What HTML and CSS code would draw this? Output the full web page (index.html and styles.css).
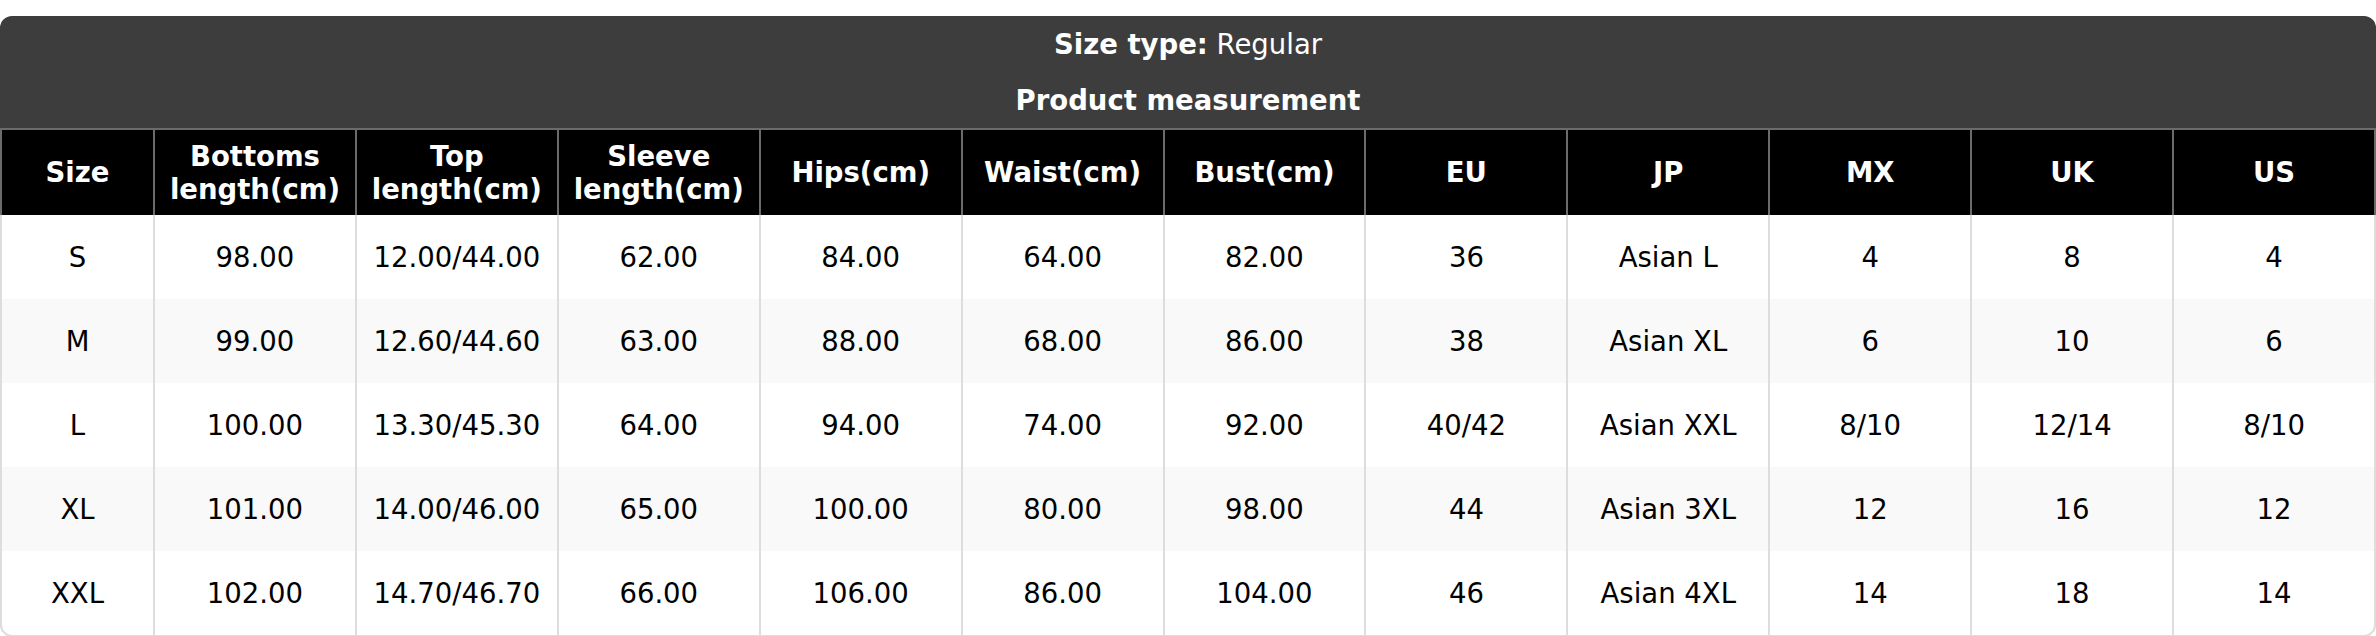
FILE: index.html
```html
<!DOCTYPE html>
<html lang="en">
<head>
<meta charset="utf-8">
<title>Size chart</title>
<link rel="stylesheet" href="styles.css">
</head>
<body>
<div class="page">
  <div class="card">
    <div class="title">
      <div class="title-line"><b>Size type:</b> Regular</div>
      <div class="title-line strong">Product measurement</div>
    </div>
    <table class="chart">
      <colgroup>
        <col class="col-size">
        <col><col><col><col><col><col><col><col><col><col><col>
      </colgroup>
      <thead>
        <tr>
          <th>Size</th>
          <th>Bottoms length(cm)</th>
          <th>Top length(cm)</th>
          <th>Sleeve length(cm)</th>
          <th>Hips(cm)</th>
          <th>Waist(cm)</th>
          <th>Bust(cm)</th>
          <th>EU</th>
          <th>JP</th>
          <th>MX</th>
          <th>UK</th>
          <th>US</th>
        </tr>
      </thead>
      <tbody>
        <tr>
          <td>S</td><td>98.00</td><td>12.00/44.00</td><td>62.00</td><td>84.00</td><td>64.00</td><td>82.00</td><td>36</td><td>Asian L</td><td>4</td><td>8</td><td>4</td>
        </tr>
        <tr>
          <td>M</td><td>99.00</td><td>12.60/44.60</td><td>63.00</td><td>88.00</td><td>68.00</td><td>86.00</td><td>38</td><td>Asian XL</td><td>6</td><td>10</td><td>6</td>
        </tr>
        <tr>
          <td>L</td><td>100.00</td><td>13.30/45.30</td><td>64.00</td><td>94.00</td><td>74.00</td><td>92.00</td><td>40/42</td><td>Asian XXL</td><td>8/10</td><td>12/14</td><td>8/10</td>
        </tr>
        <tr>
          <td>XL</td><td>101.00</td><td>14.00/46.00</td><td>65.00</td><td>100.00</td><td>80.00</td><td>98.00</td><td>44</td><td>Asian 3XL</td><td>12</td><td>16</td><td>12</td>
        </tr>
        <tr>
          <td>XXL</td><td>102.00</td><td>14.70/46.70</td><td>66.00</td><td>106.00</td><td>86.00</td><td>104.00</td><td>46</td><td>Asian 4XL</td><td>14</td><td>18</td><td>14</td>
        </tr>
      </tbody>
    </table>
  </div>
</div>
</body>
</html>
```
FILE: styles.css
```css
html, body {
  margin: 0;
  padding: 0;
  background: #ffffff;
}

body {
  font-family: "DejaVu Sans", Verdana, sans-serif;
  font-size: 27.5px;
  color: #000000;
}

.page {
  padding-top: 16px;
}

.card {
  position: relative;
  border-radius: 12px;
  overflow: hidden;
  background: #ffffff;
}

.card::after {
  content: "";
  position: absolute;
  left: 0;
  right: 0;
  bottom: 0;
  height: 40px;
  border: 2px solid #dddddd;
  border-top: none;
  border-radius: 0 0 12px 12px;
  pointer-events: none;
}

.title {
  background: #3d3d3d;
  color: #ffffff;
  text-align: center;
}

.title-line {
  height: 56px;
  line-height: 56px;
}

.title-line b,
.title-line.strong {
  font-weight: bold;
}

.chart {
  width: 100%;
  table-layout: fixed;
  border-collapse: collapse;
  border-spacing: 0;
}

.col-size {
  width: 153px;
}

.chart th,
.chart td {
  text-align: center;
  vertical-align: middle;
  padding: 0 10px;
  line-height: 33px;
}

.chart th {
  height: 85px;
  background: #000000;
  color: #ffffff;
  font-weight: bold;
  border: 2px solid #6b6b6b;
  border-bottom: 0;
}

.chart td {
  height: 84px;
  border-left: 2px solid #dddddd;
  border-right: 2px solid #dddddd;
  color: #000000;
}

.chart tbody tr:last-child td {
  border-bottom: 2px solid #dddddd;
}

.chart tbody tr:nth-child(even) td {
  background: #f9f9f9;
}

.chart tbody tr:nth-child(odd) td {
  background: #ffffff;
}
```
